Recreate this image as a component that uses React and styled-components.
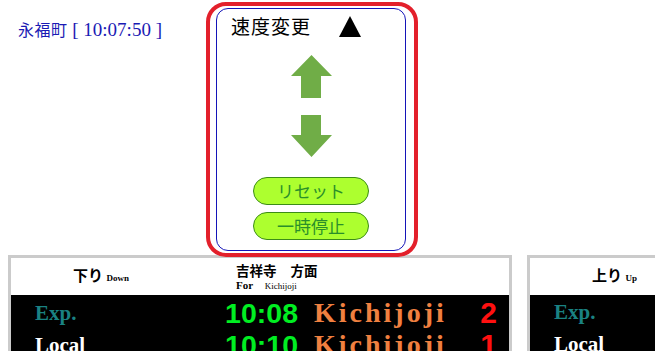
import styled, { createGlobalStyle } from "styled-components";

const GlobalStyle = createGlobalStyle`
  html, body {
    margin: 0;
    padding: 0;
    background: #fff;
    overflow: hidden;
  }
  body {
    font-family: "Liberation Serif", "Noto Sans CJK JP", serif;
  }
`;

const boards = [
  {
    dir: "下り",
    dirEn: "Down",
    dest: true,
    rows: [
      { type: "Exp.", time: "10:08", to: "Kichijoji", no: "2" },
      { type: "Local", time: "10:10", to: "Kichijoji", no: "1" },
    ],
  },
  {
    dir: "上り",
    dirEn: "Up",
    dest: false,
    rows: [
      { type: "Exp.", time: "", to: "", no: "" },
      { type: "Local", time: "", to: "", no: "" },
    ],
  },
];

const App = () => {
  return (
    <Page>
      <GlobalStyle />
      <Top>
        <Station>
          <span className="jp">永福町</span>&nbsp;[ 10:07:50 ]
        </Station>
        <Panel>
          <Inner>
            <TitleRow>
              <Title>速度変更</Title>
              <Triangle />
            </TitleRow>
            <Arrow $top={18} viewBox="0 0 41 43" width="41" height="43">
              <path d="M20.5 0 L41 21 L30 21 L30 43 L10 43 L10 21 L0 21 Z" fill="#70ad47" />
            </Arrow>
            <Arrow $top={17} viewBox="0 0 41 42" width="41" height="42">
              <path d="M10 0 H30 V20 H41 L20.5 42 L0 20 H10 Z" fill="#70ad47" />
            </Arrow>
            <PillButton $top={20}>リセット</PillButton>
            <PillButton $top={7}>一時停止</PillButton>
          </Inner>
        </Panel>
      </Top>
      <Boards>
        {boards.map((b) => (
          <Board key={b.dir}>
            <BoardHead>
              <DirLabel>
                {b.dir} <small>{b.dirEn}</small>
              </DirLabel>
              {b.dest && (
                <DestHead>
                  <div className="jp">
                    吉祥寺<span className="gap" />方面
                  </div>
                  <div className="en">
                    For <small>Kichijoji</small>
                  </div>
                </DestHead>
              )}
            </BoardHead>
            <BoardBody>
              {b.rows.map((r) => (
                <Row key={r.type}>
                  <TrainType $local={r.type === "Local"}>{r.type}</TrainType>
                  <Time>{r.time}</Time>
                  <Dest>{r.to}</Dest>
                  <Track>{r.no}</Track>
                </Row>
              ))}
            </BoardBody>
          </Board>
        ))}
      </Boards>
    </Page>
  );
};

// Styled Components

const Page = styled.div`
  width: 655px;
  height: 351px;
  overflow: hidden;
`;

const Top = styled.div`
  display: flex;
  align-items: flex-start;
  padding-top: 2px;
`;

const Station = styled.div`
  width: 188px;
  padding: 16px 0 0 18px;
  color: #1a1ab4;
  font-size: 19px;
  line-height: 22px;
  white-space: nowrap;
  .jp {
    font-family: "Noto Sans CJK JP", sans-serif;
    font-size: 16px;
    letter-spacing: 0.5px;
  }
`;

const Panel = styled.div`
  width: 190px;
  border: 4px solid #e3202b;
  border-radius: 20px;
  padding: 2px 8px 2px 6px;
  position: relative;
  z-index: 1;
`;

const Inner = styled.div`
  height: 241px;
  border: 1px solid #1414b8;
  border-radius: 12px;
  display: flex;
  flex-direction: column;
  align-items: center;
`;

const TitleRow = styled.div`
  align-self: stretch;
  display: flex;
  align-items: center;
  padding: 6px 0 0 14px;
  height: 22px;
`;

const Title = styled.div`
  font-family: "Noto Sans CJK JP", sans-serif;
  font-size: 19px;
  line-height: 22px;
  color: #000;
  letter-spacing: 1px;
`;

const Triangle = styled.div`
  width: 0;
  height: 0;
  margin-left: 28px;
  border-left: 11.5px solid transparent;
  border-right: 11.5px solid transparent;
  border-bottom: 21px solid #000;
`;

const Arrow = styled.svg`
  display: block;
  margin-top: ${(p) => p.$top}px;
`;

const PillButton = styled.button`
  margin-top: ${(p) => p.$top}px;
  width: 116px;
  height: 28px;
  border-radius: 14px;
  border: 1px solid #3c8c18;
  background: #adff2f;
  color: #2a8f2a;
  font-family: "Noto Sans CJK JP", sans-serif;
  font-size: 17px;
  line-height: 24px;
  padding: 0;
`;

const Boards = styled.div`
  display: flex;
  gap: 15px;
  padding-left: 8px;
  margin-top: -2px;
`;

const Board = styled.div`
  flex: 0 0 498px;
  height: 120px;
  border: 3px solid #cbcbcb;
  background: #fff;
`;

const BoardHead = styled.div`
  height: 37px;
  display: flex;
  align-items: flex-start;
`;

const DirLabel = styled.div`
  width: 163px;
  padding: 8px 0 0 62px;
  font-family: "Noto Sans CJK JP", sans-serif;
  font-weight: bold;
  font-size: 15px;
  line-height: 18px;
  color: #000;
  small {
    font-family: "Liberation Serif", serif;
    font-size: 9px;
    font-weight: bold;
  }
`;

const DestHead = styled.div`
  padding-top: 4px;
  color: #000;
  .jp {
    font-family: "Noto Sans CJK JP", sans-serif;
    font-weight: bold;
    font-size: 13.5px;
    line-height: 16px;
  }
  .gap {
    display: inline-block;
    width: 14px;
  }
  .en {
    font-family: "Liberation Serif", serif;
    font-weight: bold;
    font-size: 11px;
    line-height: 12px;
    margin-top: 1px;
    small {
      font-size: 9px;
      font-weight: normal;
      margin-left: 9px;
    }
  }
`;

const BoardBody = styled.div`
  background: #000;
  height: 83px;
  padding-top: 1px;
`;

const Row = styled.div`
  display: grid;
  grid-template-columns: 186px 82px 168px 1fr;
  align-items: center;
  height: 32px;
  padding-left: 24px;
  padding-right: 12px;
`;

const TrainType = styled.div`
  font-family: "Liberation Serif", serif;
  font-weight: bold;
  font-size: 21px;
  color: ${(p) => (p.$local ? "#fff" : "#1a8282")};
`;

const Time = styled.div`
  font-family: "Liberation Sans", sans-serif;
  font-weight: bold;
  font-size: 28.5px;
  color: #00ee22;
  text-align: right;
  padding-right: 5px;
`;

const Dest = styled.div`
  font-family: "Liberation Serif", serif;
  font-weight: bold;
  font-size: 28px;
  letter-spacing: 3px;
  color: #f08040;
  padding-left: 11px;
`;

const Track = styled.div`
  font-family: "Liberation Sans", sans-serif;
  font-weight: bold;
  font-size: 30px;
  color: #ff1010;
  text-align: right;
`;

export default App;
